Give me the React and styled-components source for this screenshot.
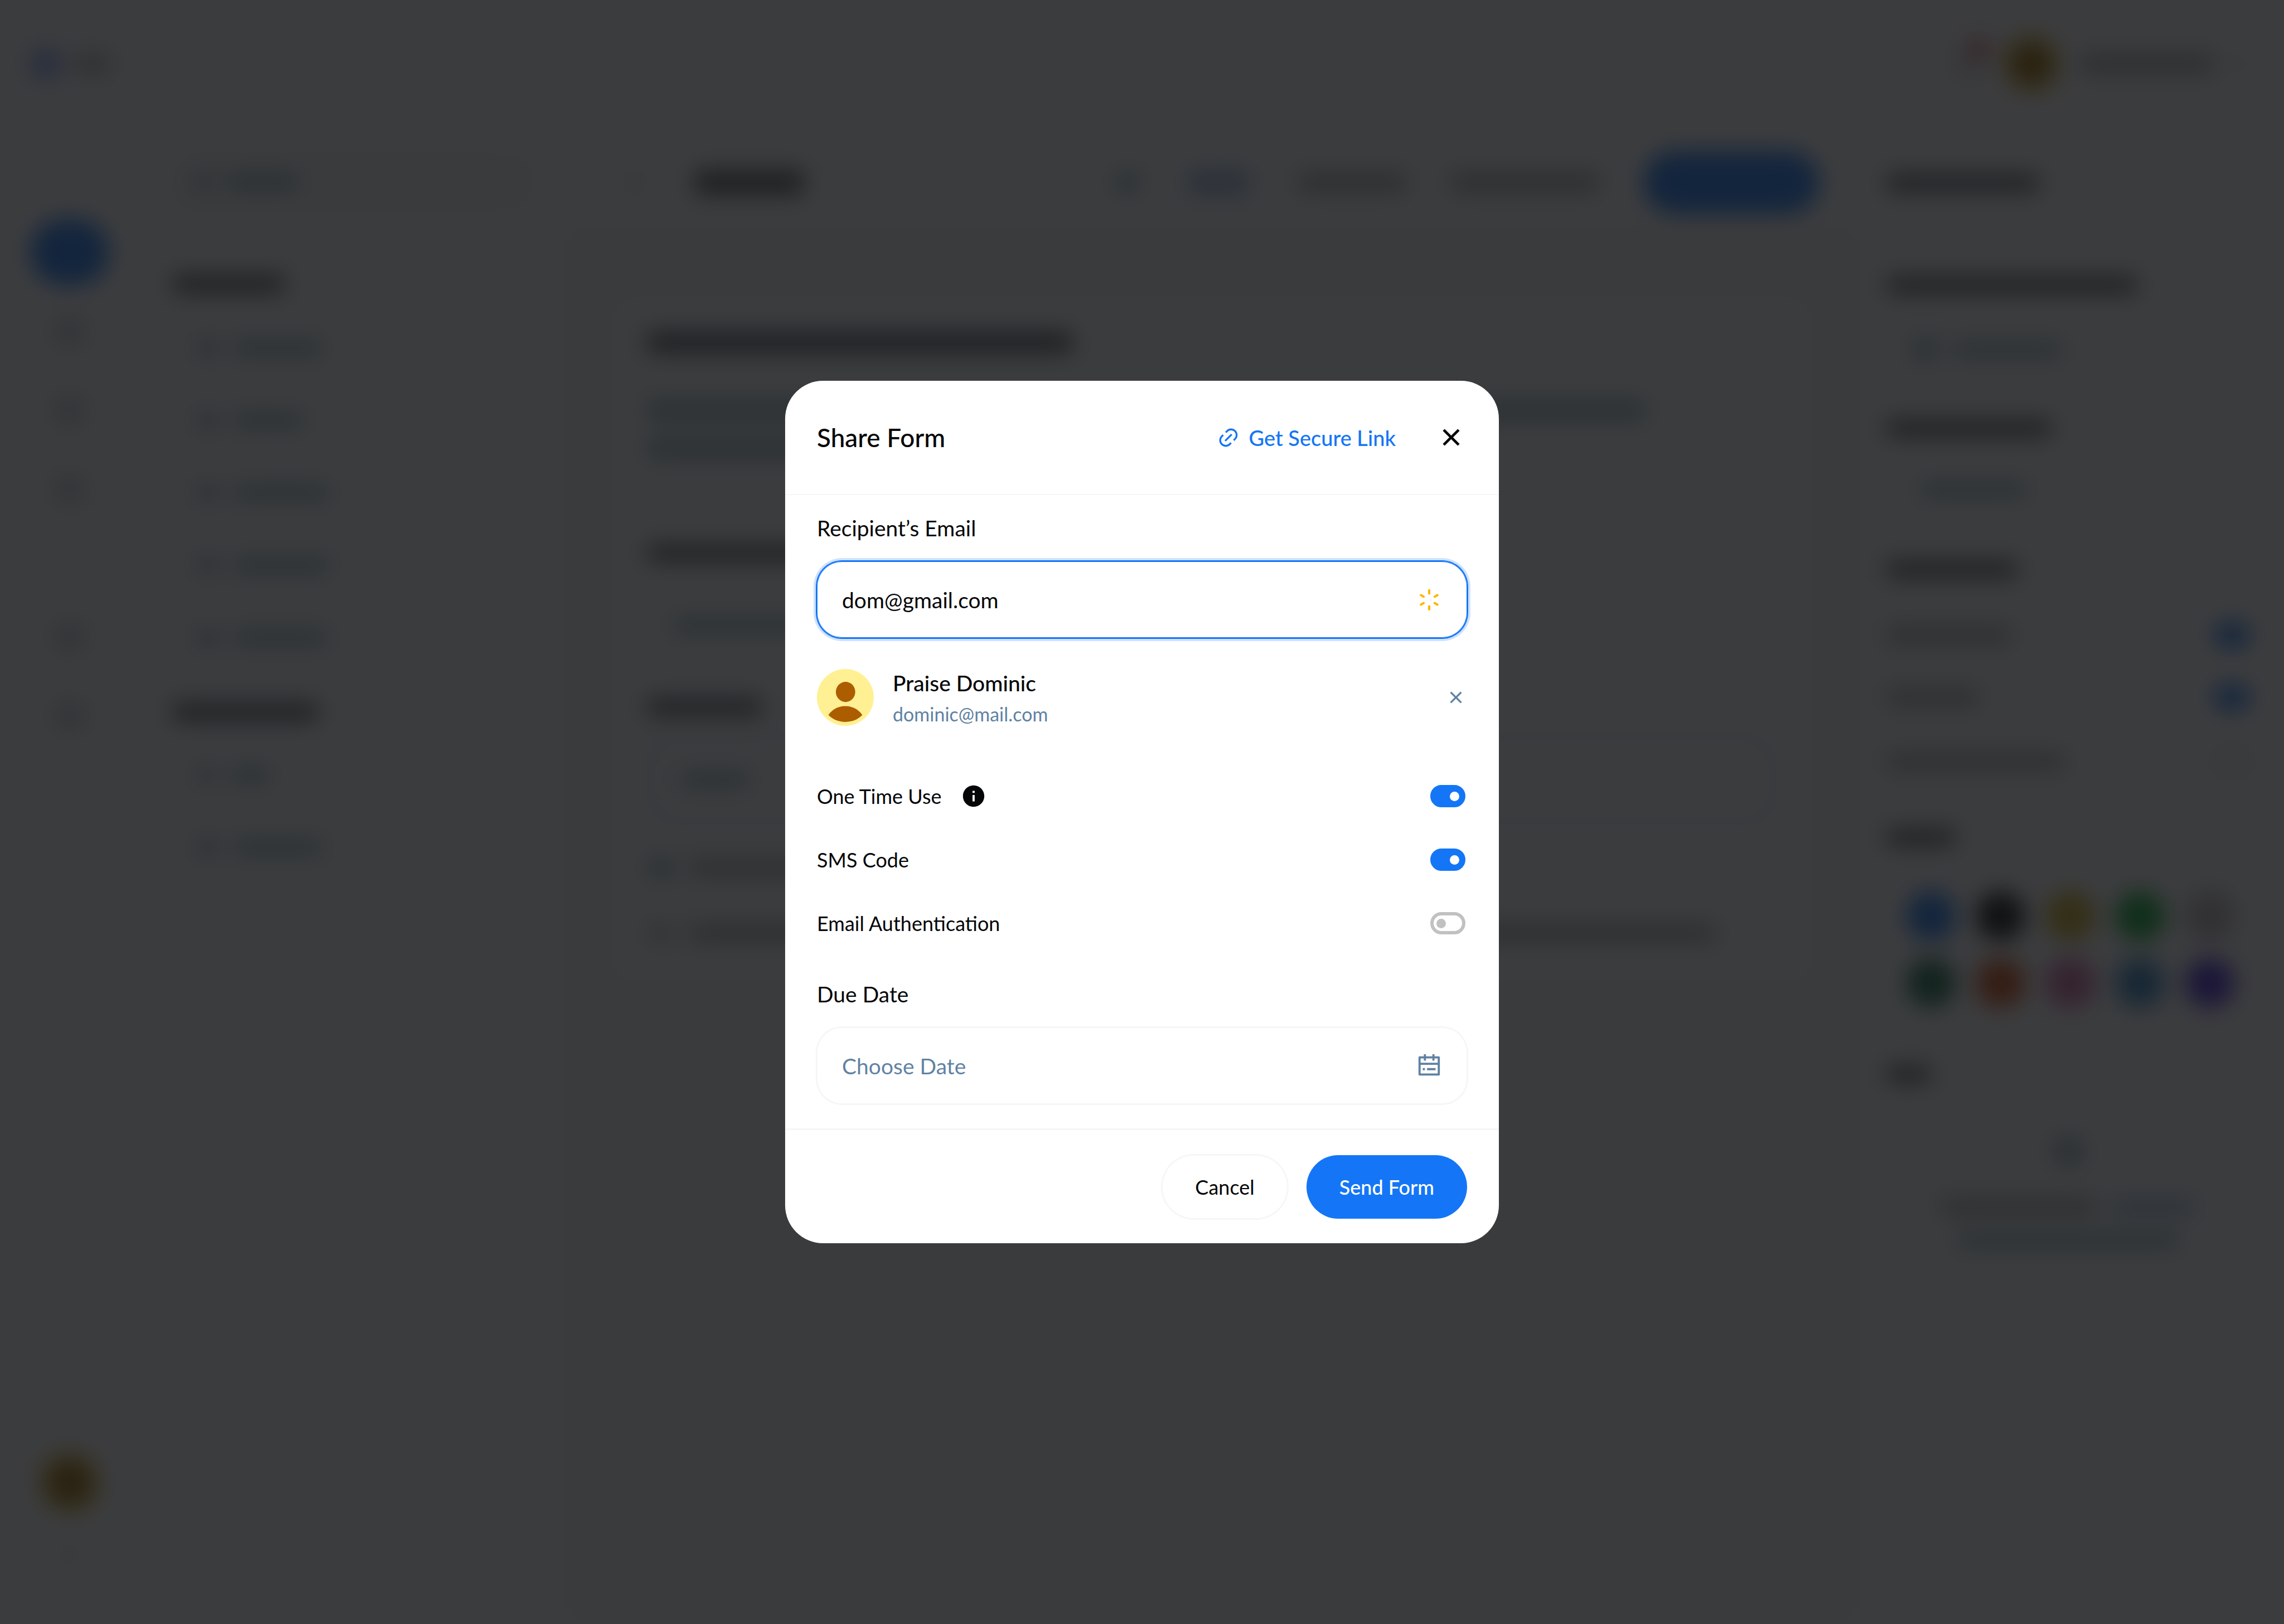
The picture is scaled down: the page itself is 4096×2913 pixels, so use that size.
import React from "react";
import styled, { createGlobalStyle, css } from "styled-components";
import { RiCloseLine, RiInformationFill, RiLink } from "react-icons/ri";

const c = {
  ink: "#050608",
  blue: "#1476f6",
  glow: "#cfe2fd",
  slate: "#5f82a3",
  line: "#f6f6f6",
  off: "#c1c1c1",
  amber: "#ffb700",
  cream: "#fff093",
  brown: "#ac5d00",
};

const GlobalStyle = createGlobalStyle`
  *, *::before, *::after { box-sizing: border-box; }
  body { margin: 0; background: #fff; }
  body, button, input {
    font-family: Lato, "Liberation Sans", sans-serif;
    color: ${c.ink};
  }
  button { border: 0; padding: 0; background: none; cursor: pointer; }
  h2, p { margin: 0; }
  svg { display: block; flex: none; }
`;

const Page = styled.div`
  display: grid;
  min-height: 100vh;
  overflow: hidden;
`;

/* ---------- workspace behind the dialog ---------- */

const Workspace = styled.div`
  grid-area: 1 / 1;
  display: flex;
  flex-direction: column;
  filter: blur(20px);
`;

const TopBar = styled.div`
  display: flex;
  align-items: center;
  justify-content: space-between;
  height: 227px;
  padding: 0 72px 0 52px;
`;

const Cluster = styled.div`
  display: flex;
  align-items: center;
  gap: ${(p) => p.$gap || 24}px;
`;

const Columns = styled.div`
  flex: 1;
  display: grid;
  grid-template-columns: 250px 758px 1fr 758px;
`;

const tones = {
  ink: "rgba(5, 6, 8, 0.7)",
  soft: "rgba(5, 6, 8, 0.35)",
  slate: "rgba(60, 120, 135, 0.5)",
  sky: "rgba(30, 100, 190, 0.4)",
};

const Bar = styled.div`
  width: ${(p) => p.$w}px;
  height: ${(p) => p.$h || 28}px;
  border-radius: 8px;
  background: ${(p) => tones[p.$tone || "slate"]};
`;

const Dot = styled.div`
  width: ${(p) => p.$size}px;
  height: ${(p) => p.$size}px;
  border-radius: 50%;
  background: ${(p) => p.$color};
`;

const Face = styled(Dot)`
  background: radial-gradient(#8f5a00 30%, #e2bd28 65%);
`;

const Bell = styled.div`
  position: relative;
  width: 48px;
  height: 48px;
  border: 8px solid rgba(5, 6, 8, 0.3);
  border-radius: 24px;
  &::after {
    content: "";
    position: absolute;
    right: -20px;
    top: -30px;
    width: 40px;
    height: 40px;
    border-radius: 50%;
    background: rgba(225, 50, 60, 0.7);
  }
`;

const Rail = styled.div`
  display: flex;
  flex-direction: column;
  align-items: center;
  gap: 28px;
  padding: 166px 0 120px;
`;

const RailItem = styled.div`
  display: grid;
  place-items: center;
  width: 140px;
  height: 118px;
  margin-top: ${(p) => p.$mt || 0}px;
  margin-bottom: -4px;
  border-radius: 59px;
  background: ${(p) => (p.$active ? c.blue : "transparent")};
`;

const Glyph = styled.div`
  width: 50px;
  height: 46px;
  border-radius: 12px;
  background: rgba(40, 70, 80, 0.28);
`;

const RailFoot = styled.div`
  margin-top: auto;
  display: flex;
  flex-direction: column;
  align-items: center;
  gap: 70px;
`;

const Panel = styled.div`
  display: flex;
  flex-direction: column;
  padding: 0 ${(p) => p.$pr}px 0 ${(p) => p.$pl}px;
`;

const Line = styled.div`
  display: flex;
  align-items: center;
  gap: 26px;
  height: 60px;
  margin-top: ${(p) => p.$mt || 0}px;
  padding-left: ${(p) => p.$pl || 0}px;
  justify-content: ${(p) => p.$justify || "flex-start"};
`;

const SearchBox = styled.div`
  display: flex;
  align-items: center;
  height: 114px;
  margin-top: 42px;
  padding-left: 36px;
  border-radius: 46px;
  background: #f8f8f8;
`;

const Center = styled.div`
  display: flex;
  flex-direction: column;
`;

const Toolbar = styled.div`
  display: flex;
  align-items: center;
  justify-content: space-between;
  height: 175px;
  padding: 24px 76px 0 120px;
`;

const Primary = styled.div`
  width: 314px;
  height: 112px;
  border-radius: 56px;
  background: ${c.blue};
`;

const Canvas = styled.div`
  flex: 1;
  padding: 138px 98px 0;
  background: #f8f8f8;
`;

const Sheet = styled.div`
  padding: 14px 55px 50px;
  background: #fff;
`;

const ActiveField = styled.div`
  display: flex;
  align-items: center;
  height: 164px;
  margin-top: 18px;
  padding-left: 46px;
  border: 12px solid rgba(40, 130, 170, 0.16);
  border-radius: 46px;
`;

const Swatches = styled.div`
  display: grid;
  grid-template-columns: repeat(5, 88px);
  gap: 32px 37px;
  margin-top: 67px;
  padding-left: 35px;
`;

const Pill = styled.div`
  width: 63px;
  height: 44px;
  border-radius: 22px;
  background: ${(p) => (p.$on ? c.blue : "transparent")};
  border: 6px solid ${(p) => (p.$on ? c.blue : "#c8c8c8")};
`;

const swatchColors = [
  "#1476f6", "#050608", "#d4ae10", "#00b028", "#c0bcc0",
  "#126a42", "#d84808", "#d868a8", "#2f86c8", "#3f20d8",
];

const fieldWidths = [160, 128, 174, 174, 170];

function Backdrop() {
  return (
    <Workspace aria-hidden="true">
      <TopBar>
        <Cluster $gap={20}>
          <Dot $size={60} $color="rgba(20, 80, 246, 0.45)" />
          <Bar $w={66} $tone="soft" />
        </Cluster>
        <Cluster $gap={36}>
          <Bell />
          <Face $size={102} />
          <Bar $w={240} $tone="soft" $h={32} />
          <Bar $w={18} $tone="soft" $h={10} />
        </Cluster>
      </TopBar>
      <Columns>
        <Rail>
          <RailItem $active />
          <RailItem><Glyph /></RailItem>
          <RailItem><Glyph /></RailItem>
          <RailItem><Glyph /></RailItem>
          <RailItem $mt={122}><Glyph /></RailItem>
          <RailItem><Glyph /></RailItem>
          <RailFoot>
            <Face $size={108} />
            <Bar $w={20} $h={10} $tone="soft" />
          </RailFoot>
        </Rail>
        <Panel $pl={60} $pr={44}>
          <SearchBox>
            <Cluster>
              <Bar $w={36} />
              <Bar $w={130} $h={30} />
            </Cluster>
          </SearchBox>
          <Line $mt={96}><Bar $w={200} $tone="ink" $h={30} /></Line>
          {fieldWidths.map((w, i) => (
            <Line key={i} $mt={i ? 70 : 55} $pl={42}>
              <Bar $w={40} $h={30} />
              <Bar $w={w} />
            </Line>
          ))}
          <Line $mt={73}><Bar $w={260} $tone="ink" $h={30} /></Line>
          <Line $mt={53} $pl={42}><Bar $w={36} /><Bar $w={70} /></Line>
          <Line $mt={70} $pl={42}><Bar $w={40} $h={30} /><Bar $w={160} /></Line>
        </Panel>
        <Center>
          <Toolbar>
            <Cluster $gap={96}>
              <Bar $w={22} $tone="soft" $h={12} />
              <Bar $w={196} $tone="ink" $h={42} />
            </Cluster>
            <Cluster $gap={80}>
              <Cluster $gap={86}>
                <Bar $w={44} $h={36} />
                <Bar $w={112} $h={46} $tone="sky" />
                <Bar $w={194} $h={32} $tone="soft" />
              </Cluster>
              <Cluster $gap={80}>
                <Bar $w={266} $h={32} $tone="soft" />
                <Primary />
              </Cluster>
            </Cluster>
          </Toolbar>
          <Canvas>
            <Sheet>
              <Line $mt={30}><Bar $w={762} $h={36} $tone="ink" /></Line>
              <Line $mt={62}><Bar $w={1790} $h={38} /></Line>
              <Line $mt={8}><Bar $w={1300} $h={38} /></Line>
              <Line $mt={128}><Bar $w={420} $tone="ink" /></Line>
              <Line $mt={70} $pl={46}><Bar $w={380} /></Line>
              <Line $mt={86}><Bar $w={206} $tone="ink" /></Line>
              <ActiveField><Bar $w={126} /></ActiveField>
              <Line $mt={46}><Bar $w={50} $h={34} /><Bar $w={460} $tone="soft" /></Line>
              <Line $mt={58}><Bar $w={50} $h={20} $tone="soft" /><Bar $w={1840} $h={30} $tone="soft" /></Line>
            </Sheet>
          </Canvas>
        </Center>
        <Panel $pl={46} $pr={62}>
          <Line $mt={71}><Bar $w={272} $tone="ink" /></Line>
          <Line $mt={123}><Bar $w={448} $tone="ink" /></Line>
          <Line $mt={56} $pl={46}><Bar $w={44} $h={40} /><Bar $w={200} /></Line>
          <Line $mt={81}><Bar $w={294} $tone="ink" /></Line>
          <Line $mt={50} $pl={60}><Bar $w={190} /></Line>
          <Line $mt={83}><Bar $w={234} $tone="ink" /></Line>
          <Line $mt={58} $justify="space-between"><Bar $w={222} $tone="soft" /><Pill $on /></Line>
          <Line $mt={52} $justify="space-between"><Bar $w={164} $tone="soft" /><Pill $on /></Line>
          <Line $mt={55} $justify="space-between"><Bar $w={318} $tone="soft" /><Pill /></Line>
          <Line $mt={76}><Bar $w={122} $tone="ink" /></Line>
          <Swatches>
            {swatchColors.map((color) => <Dot key={color} $size={88} $color={color} />)}
          </Swatches>
          <Line $mt={90}><Bar $w={78} $tone="ink" /></Line>
          <Line $mt={78} $justify="center"><Bar $w={54} $h={48} /></Line>
          <Line $mt={40} $justify="center"><Bar $w={280} $tone="soft" /><Bar $w={150} $tone="sky" /></Line>
          <Line $justify="center"><Bar $w={400} /></Line>
        </Panel>
      </Columns>
    </Workspace>
  );
}

/* ---------- dialog ---------- */

const Scrim = styled.div`
  grid-area: 1 / 1;
  position: relative;
  display: grid;
  place-items: center;
  background: rgba(19, 20, 23, 0.83);
`;

const Dialog = styled.form`
  width: 100%;
  max-width: 1280px;
  overflow: hidden;
  border-radius: 68px;
  background: #fff;
`;

const Header = styled.header`
  display: flex;
  align-items: center;
  justify-content: space-between;
  height: 205px;
  padding: 0 57px;
  border-bottom: 2px solid ${c.line};
`;

const Title = styled.h2`
  font-size: 46px;
  line-height: 58px;
  font-weight: 500;
`;

const HeaderActions = styled.div`
  display: flex;
  align-items: center;
  gap: 71px;
`;

const SecureLink = styled.a`
  display: flex;
  align-items: center;
  gap: 17px;
  font-size: 38px;
  line-height: 50px;
  font-weight: 500;
  color: ${c.blue};
  text-decoration: none;
`;

const IconButton = styled.button`
  color: ${(p) => (p.$muted ? c.slate : c.ink)};
`;

const Body = styled.div`
  display: flex;
  flex-direction: column;
  padding: 34px 57px 44px;
`;

const FieldGroup = styled.div`
  display: flex;
  flex-direction: column;
  gap: 35px;
`;

const FieldLabel = styled.label`
  font-size: 39px;
  line-height: 50px;
`;

const Field = styled.div`
  display: flex;
  align-items: center;
  height: 137px;
  padding: 0 45px;
  border-radius: 45px;
  ${(p) =>
    p.$active
      ? css`box-shadow: inset 0 0 0 1px ${c.blue}, 0 0 0 2px ${c.blue}, 0 0 0 6px ${c.glow};`
      : css`box-shadow: inset 0 0 0 1px ${c.line}, 0 0 0 2px ${c.line};`}
`;

const TextInput = styled.input`
  flex: 1;
  min-width: 0;
  height: 60px;
  padding: 0;
  border: 0;
  outline: 0;
  background: none;
  font-size: 39px;
  &::placeholder { color: ${c.slate}; opacity: 1; }
`;

const Person = styled.div`
  display: flex;
  align-items: center;
  gap: 34px;
  margin: 56px 0 69px;
`;

const PersonText = styled.div`
  flex: 1;
  display: flex;
  flex-direction: column;
  gap: 9px;
`;

const PersonName = styled.p`
  font-size: 39px;
  line-height: 50px;
  font-weight: 500;
`;

const PersonMail = styled.p`
  font-size: 34px;
  line-height: 43px;
  color: ${c.slate};
`;

const Options = styled.div`
  display: flex;
  flex-direction: column;
  margin-bottom: 45px;
`;

const Option = styled.div`
  display: flex;
  align-items: center;
  height: 114px;
  padding-right: 3px;
`;

const OptionLabel = styled.label`
  font-size: 36px;
  line-height: 46px;
`;

const InfoButton = styled.button`
  margin-left: 34px;
`;

const Switch = styled.input`
  appearance: none;
  display: flex;
  align-items: center;
  width: 63px;
  height: 40px;
  margin: 0 0 0 auto;
  padding: 0 5px;
  border: 6px solid ${c.off};
  border-radius: 20px;
  cursor: pointer;
  &::before {
    content: "";
    width: 17px;
    height: 17px;
    border-radius: 50%;
    background: ${c.off};
  }
  &:checked {
    justify-content: flex-end;
    border-color: ${c.blue};
    background: ${c.blue};
  }
  &:checked::before { background: #fff; }
`;

const Footer = styled.footer`
  display: flex;
  align-items: center;
  justify-content: flex-end;
  gap: 34px;
  height: 206px;
  padding: 0 57px;
  border-top: 3px solid ${c.line};
`;

const Button = styled.button`
  height: 114px;
  padding: 0 59px;
  border-radius: 57px;
  font-size: 36px;
  ${(p) =>
    p.$primary
      ? css`background: ${c.blue}; color: #fff; font-weight: 500;`
      : css`box-shadow: inset 0 0 0 1px ${c.line}, 0 0 0 2px ${c.line};`}
`;

const Spinner = () => (
  <svg width="46" height="46" viewBox="-12 -12 24 24" stroke={c.amber} strokeWidth="2.2" strokeLinecap="round" aria-hidden="true">
    {[0, 60, 120, 180, 240, 300].map((a) => (
      <path key={a} d="M0 -8.900V-6" transform={`rotate(${a})`} />
    ))}
  </svg>
);

const CalendarIcon = () => (
  <svg width="46" height="46" viewBox="0 0 24 24" fill={c.slate} aria-hidden="true">
    <path
      fillRule="evenodd"
      d="M7 1H9V3H15V1H17V3H21Q22 3 22 4V20Q22 21 21 21H3Q2 21 2 20V4Q2 3 3 3H7ZM4 5V9H20V5H17V7H15V5H9V7H7V5ZM4 11V19H20V11ZM6 14H8V16H6ZM10 14H18V16H10Z"
    />
  </svg>
);

const Avatar = () => (
  <svg width="102" height="102" viewBox="0 0 144 144" aria-hidden="true">
    <circle cx="72" cy="72" r="72" fill={c.cream} />
    <ellipse cx="72.500" cy="58" rx="24.500" ry="25.500" fill={c.brown} />
    <path d="M29 116.500C39 102 54 94 72 94S105 102 115 116.500C104 128 89 134 72 134S40 128 29 116.500Z" fill={c.brown} />
  </svg>
);

const options = [
  { id: "one-time", label: "One Time Use", on: true, info: true },
  { id: "sms", label: "SMS Code", on: true },
  { id: "email-auth", label: "Email Authentication", on: false },
];

export default function App() {
  return (
    <Page>
      <GlobalStyle />
      <Backdrop />
      <Scrim>
        <Dialog role="dialog" aria-labelledby="share-title" onSubmit={(e) => e.preventDefault()}>
          <Header>
            <Title id="share-title">Share Form</Title>
            <HeaderActions>
              <SecureLink href="#link">
                <RiLink size={40} />
                Get Secure Link
              </SecureLink>
              <IconButton type="button" aria-label="Close">
                <RiCloseLine size={57} />
              </IconButton>
            </HeaderActions>
          </Header>
          <Body>
            <FieldGroup>
              <FieldLabel htmlFor="email">Recipient’s Email</FieldLabel>
              <Field $active>
                <TextInput id="email" type="email" defaultValue="dom@gmail.com" />
                <Spinner />
              </Field>
            </FieldGroup>
            <Person>
              <Avatar />
              <PersonText>
                <PersonName>Praise Dominic</PersonName>
                <PersonMail>dominic@mail.com</PersonMail>
              </PersonText>
              <IconButton type="button" $muted aria-label="Remove recipient">
                <RiCloseLine size={40} />
              </IconButton>
            </Person>
            <Options>
              {options.map((o) => (
                <Option key={o.id}>
                  <OptionLabel htmlFor={o.id}>{o.label}</OptionLabel>
                  {o.info && (
                    <InfoButton type="button" aria-label="About one time use">
                      <RiInformationFill size={46} />
                    </InfoButton>
                  )}
                  <Switch id={o.id} type="checkbox" defaultChecked={o.on} />
                </Option>
              ))}
            </Options>
            <FieldGroup>
              <FieldLabel htmlFor="due">Due Date</FieldLabel>
              <Field>
                <TextInput id="due" type="text" placeholder="Choose Date" />
                <CalendarIcon />
              </Field>
            </FieldGroup>
          </Body>
          <Footer>
            <Button type="button">Cancel</Button>
            <Button type="submit" $primary>Send Form</Button>
          </Footer>
        </Dialog>
      </Scrim>
    </Page>
  );
}
